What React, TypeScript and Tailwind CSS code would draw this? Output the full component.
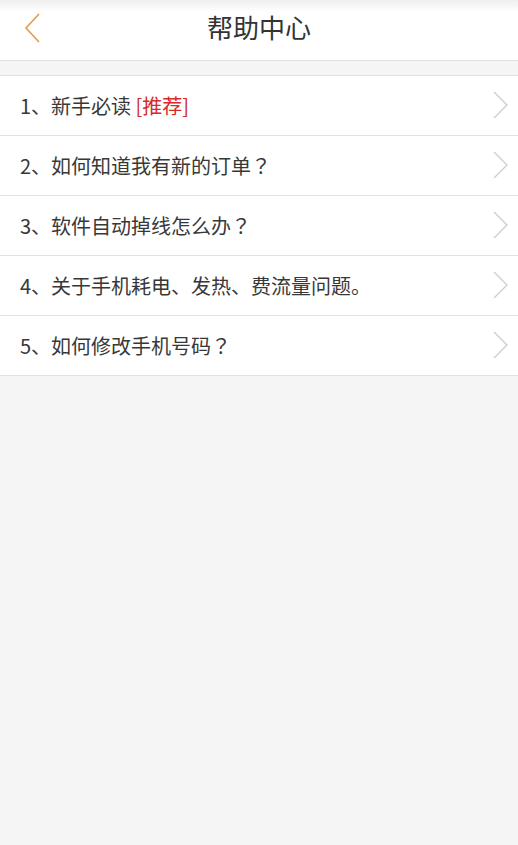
import React from "react";

const items: { text: string; tag?: string; q?: boolean }[] = [
  { text: "1、新手必读 ", tag: "[推荐]" },
  { text: "2、如何知道我有新的订单", q: true },
  { text: "3、软件自动掉线怎么办", q: true },
  { text: "4、关于手机耗电、发热、费流量问题。" },
  { text: "5、如何修改手机号码", q: true },
];

function Chevron({ left }: { left?: boolean }) {
  return (
    <svg width="16" height="30" viewBox="0 0 16 30" fill="none">
      {left ? (
        <path d="M15 1 L2 15 L15 29" stroke="#e39a4c" strokeWidth="1.6" />
      ) : (
        <path d="M1 1 L14 14 L1 27" stroke="#cfcfcf" strokeWidth="1.4" />
      )}
    </svg>
  );
}

export default function App() {
  return (
    <div
      className="w-[518px] h-[845px] bg-[#f5f5f5] flex flex-col"
      style={{ fontFamily: '"Noto Sans CJK SC", "Noto Sans", sans-serif' }}
    >
      {/* header */}
      <div className="h-[61px] bg-gradient-to-b from-[#efefef] via-white via-[20%] to-white border-b border-[#e2e2e2] flex items-center relative">
        <div className="absolute left-[24px] top-[13px]">
          <Chevron left />
        </div>
        <div className="flex-1 text-center text-[26px] text-[#333] leading-none pb-[6px]">
          帮助中心
        </div>
      </div>

      <div className="h-[14px]" />

      <div className="bg-white border-t border-[#e2e2e2]">
        {items.map((it, i) => (
          <div
            key={i}
            className="h-[60px] flex items-center justify-between pl-[20px] pr-[9px] border-b border-[#e2e2e2]"
          >
            <span className="text-[20px] text-[#383838]">
              {it.text}
              {it.tag && <span className="text-[#d42a2a]">{it.tag}</span>}
              {it.q && (
                <span style={{ fontFamily: '"Noto Sans CJK TC", sans-serif' }}>？</span>
              )}
            </span>
            <Chevron />
          </div>
        ))}
      </div>
    </div>
  );
}
